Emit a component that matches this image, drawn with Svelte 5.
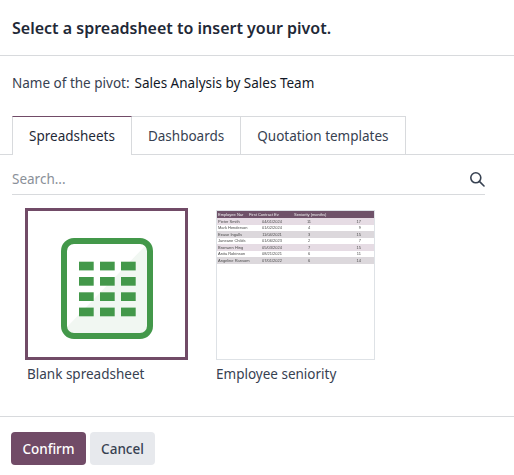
<script>
  const tabs = ["Spreadsheets", "Dashboards", "Quotation templates"];
  const rows = [
    ["Pieter Smith", "04/01/2024", "11", "17"],
    ["Mark Henderson", "01/02/2024", "4", "9"],
    ["Eease Ingalls", "11/04/2021", "3", "15"],
    ["Janeane Childs", "01/06/2023", "2", "7"],
    ["Bronwen Hing", "05/03/2024", "7", "15"],
    ["Anita Robinson", "08/21/2021", "6", "11"],
    ["Angeline Ransom", "07/01/2022", "6", "14"]
  ];
</script>

<div class="dialog">
  <header class="head">
    <h4>Select a spreadsheet to insert your pivot.</h4>
  </header>

  <main class="body">
    <div class="name">
      <span class="label">Name of the pivot:</span>
      <span class="value">Sales Analysis by Sales Team</span>
    </div>

    <ul class="tabs">
      {#each tabs as tab, i}
        <li class:active={i === 0}>{tab}</li>
      {/each}
    </ul>

    <div class="search">
      <span class="placeholder">Search...</span>
      <svg width="16" height="16" viewBox="0 0 16 16" fill="none" stroke="#374151" stroke-width="1.6">
        <circle cx="6.8" cy="6.8" r="5" />
        <path d="M10.4 10.4 15 15" stroke-linecap="round" />
      </svg>
    </div>

    <div class="grid">
      <div class="card">
        <div class="thumb blank">
          <svg width="92" height="101" viewBox="0 0 92 101">
            <path d="M85 7 6 89v3a6 6 0 0 0 6 3h68a7 7 0 0 0 7-7V12z" fill="#f1f7f2" />
            <rect x="3" y="3" width="86" height="95" rx="10" fill="none" stroke="#43984a" stroke-width="6" />
            {#each [0, 1, 2, 3] as r}
              {#each [0, 1, 2] as c}
                <rect x={18 + c * 21} y={23.7 + r * 15.3} width="14.7" height="8.7" fill="#43984a" />
              {/each}
            {/each}
          </svg>
        </div>
        <div class="title">Blank spreadsheet</div>
      </div>

      <div class="card">
        <div class="thumb sheet">
          <div class="mini">
            <div class="mini-row mini-head">
              <span>Employee Nar</span><span>First Contract Ev</span><span>Seniority (months)</span>
            </div>
            {#each rows as row}
              <div class="mini-row">
                {#each row as cell}<span>{cell}</span>{/each}
              </div>
            {/each}
          </div>
        </div>
        <div class="title">Employee seniority</div>
      </div>
    </div>
  </main>

  <footer class="foot">
    <button class="primary" type="button">Confirm</button>
    <button class="secondary" type="button">Cancel</button>
  </footer>
</div>

<style>
  :global(body) {
    background: #fff;
  }

  .dialog {
    width: 514px;
    height: 475px;
    display: flex;
    flex-direction: column;
    font-family: "Noto Sans", "Open Sans", sans-serif;
    font-size: 13.5px;
    color: #374151;
  }

  .head {
    height: 55px;
    border-bottom: 1px solid #d8dadd;
    display: flex;
    align-items: center;
    padding: 0 12px;
  }

  h4 {
    margin: 0;
    font-size: 16px;
    font-weight: 600;
    color: #1f2937;
  }

  .body {
    flex: 1;
    padding-top: 16px;
  }

  .name {
    height: 22px;
    padding-left: 12px;
    display: flex;
    align-items: center;
    gap: 5px;
    margin-bottom: 22px;
  }

  .value {
    color: #111827;
  }

  .tabs {
    list-style: none;
    margin: 0;
    padding: 0 0 0 12px;
    display: flex;
    height: 38px;
    border-bottom: 1px solid #d8dadd;
  }

  .tabs li {
    padding: 0 16px;
    display: flex;
    align-items: center;
    border: 1px solid #d8dadd;
    border-left: 0;
    border-bottom: 0;
    color: #374151;
  }

  .tabs li.active {
    border-left: 1px solid #d8dadd;
    border-top: 1px solid #714b67;
    background: #fff;
    margin-bottom: -1px;
    color: #1f2937;
  }

  .search {
    margin: 12px 29px 0 12px;
    height: 28px;
    border-bottom: 1px solid #d8dadd;
    display: flex;
    align-items: center;
    justify-content: space-between;
    box-sizing: border-box;
    padding-bottom: 3px;
  }

  .placeholder {
    color: #8a9099;
  }

  .grid {
    display: flex;
    margin-top: 13px;
    padding-left: 25px;
    gap: 28px;
  }

  .thumb {
    display: flex;
    align-items: center;
    justify-content: center;
    box-sizing: border-box;
  }

  .blank {
    width: 163px;
    height: 152px;
    padding-top: 8px;
    border: 3px solid #714b67;
  }

  .sheet {
    width: 159px;
    height: 150px;
    margin-top: 2px;
    border: 1px solid #dee2e6;
    align-items: flex-start;
  }

  .mini {
    width: 100%;
    filter: blur(0.5px);
  }

  .mini-row {
    display: grid;
    grid-template-columns: 33px 42px 32px 1fr;
    height: 6.5px;
    align-items: center;
    font-family: "Liberation Sans", sans-serif;
    font-size: 4px;
    color: #4b4b4b;
    padding-left: 1px;
    white-space: nowrap;
  }

  .mini-row:nth-child(even) {
    background: #e6dce4;
  }

  .mini-row:nth-child(4n + 4) {
    background: #dcd8dc;
  }

  .mini-row span:nth-child(2),
  .mini-row span:nth-child(3) {
    text-align: center;
  }

  .mini-row span:nth-child(4) {
    text-align: right;
    padding-right: 13px;
  }

  .mini-row.mini-head {
    grid-template-columns: 31px 45px 1fr;
    background: #6f5269;
    color: #eee;
    height: 7px;
  }

  .mini-row.mini-head span {
    text-align: left;
  }

  .title {
    margin-top: 4px;
    padding-left: 2px;
    line-height: 20px;
  }

  .card:last-child .title {
    padding-left: 0;
  }

  .foot {
    height: 59px;
    box-sizing: border-box;
    border-top: 1px solid #d8dadd;
    padding: 15px 11px 0;
    display: flex;
    gap: 4px;
    align-items: flex-start;
  }

  button {
    height: 33px;
    border: 0;
    border-radius: 4px;
    font-family: inherit;
    font-size: 13.5px;
    font-weight: 500;
    padding: 0;
  }

  .primary {
    width: 75px;
    background: #714b67;
    color: #fff;
  }

  .secondary {
    width: 65px;
    background: #e7e9ed;
    color: #374151;
  }
</style>
